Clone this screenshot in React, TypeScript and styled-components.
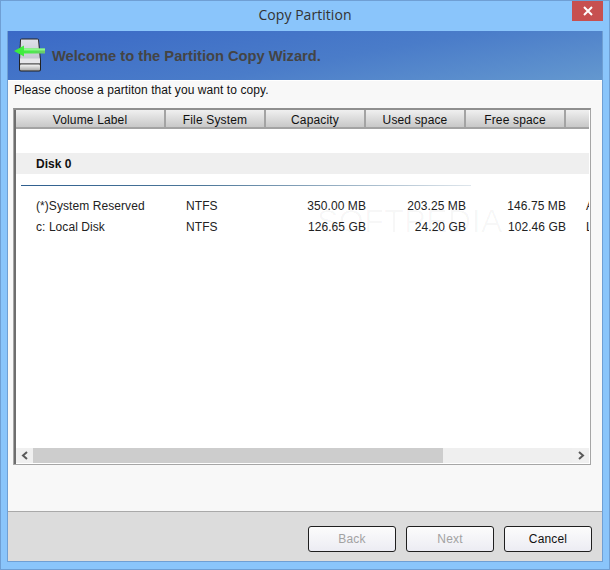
import React from 'react';
import styled, { createGlobalStyle } from 'styled-components';

const GlobalStyle = createGlobalStyle`
    html, body {
        margin: 0;
        padding: 0;
        overflow: hidden;
    }
    body {
        font-family: "Liberation Sans", Arial, sans-serif;
        font-size: 12px;
    }
`;

const Window = styled.div`
    display: flex;
    flex-direction: column;
    box-sizing: border-box;
    position: relative;
    width: 610px;
    height: 570px;
    border: 1px solid #6f9fd4;
    background-color: #8ac5fb;
    padding: 0 7px 7px;
`;

const TitleBar = styled.div`
    display: flex;
    align-items: center;
    justify-content: center;
    box-sizing: border-box;
    flex: none;
    height: 30px;
    padding-bottom: 3px;
    font-family: "Open Sans", sans-serif;
    font-size: 14px;
    letter-spacing: 0.05px;
    color: #333;
`;

const CloseButton = styled.div`
    position: absolute;
    top: 0;
    right: 6px;
    display: flex;
    align-items: center;
    justify-content: center;
    width: 31px;
    height: 20px;
    background-color: #c75050;
`;

const Panel = styled.div`
    display: flex;
    flex-direction: column;
    flex: 1;
    min-height: 0;
    border: 1px solid #6f9fd4;
    border-width: 0 1px 1px;
    margin: 0 -1px;
`;

const Banner = styled.div`
    display: flex;
    align-items: center;
    gap: 6px;
    flex: none;
    height: 49px;
    padding-left: 5px;
    border-bottom: 1px solid #fff;
    box-shadow: 0 1px 0 #a9a9a9;
    background: linear-gradient(170deg, #3a69c6 0%, #4a7cc9 55%, #6498cf 100%);
`;

const BannerTitle = styled.div`
    font-size: 14.7px;
    font-weight: bold;
    color: #444;
`;

const Content = styled.div`
    display: flex;
    flex-direction: column;
    flex: 1;
    min-height: 0;
    background-color: #f8f8f8;
    padding: 2px 11px 46px 5px;
`;

const Prompt = styled.div`
    flex: none;
    height: 25px;
    padding-left: 1px;
    line-height: 15px;
    letter-spacing: 0.07px;
    color: #111;
`;

const ListBox = styled.div`
    display: flex;
    flex-direction: column;
    flex: 1;
    min-height: 0;
    position: relative;
    border: 1px solid #a6a6a6;
    border-top-width: 2px;
    border-top-color: #8f8f8f;
    padding: 0 1px 1px 2px;
    background-color: #fff;
    box-shadow: inset 2px 0 0 #6e6e6e;
`;

const HeaderRow = styled.div`
    display: grid;
    grid-template-columns: 150px 100px 100px 100px 100px 1fr;
    flex: none;
    height: 17px;
    border-bottom: 2px solid #a3a3a3;
    background: linear-gradient(#f0f0f0, #c8c8c8);
`;

const HeaderCell = styled.div`
    display: flex;
    align-items: center;
    justify-content: center;
    box-sizing: border-box;
    padding-top: 3px;
    border-right: 2px solid #a3a3a3;
    letter-spacing: 0.15px;
    color: #111;
    &:last-child {
        border-right: 0;
    }
`;

const ListBody = styled.div`
    flex: 1;
    min-height: 0;
    overflow: hidden;
    padding-top: 24px;
`;

const DiskBand = styled.div`
    height: 21px;
    line-height: 23px;
    padding-left: 20px;
    background-color: #efefef;
    font-weight: bold;
    color: #111;
`;

const DiskRule = styled.div`
    width: 450px;
    height: 1px;
    margin: 11px 0 9px 5px;
    background: linear-gradient(90deg, #2f5f8f 0%, #4d7799 40%, #dfe6ec 100%);
`;

const PartitionRow = styled.div`
    display: grid;
    grid-template-columns: 150px 80px 100px 100px 100px minmax(0, 1fr);
    height: 21px;
    line-height: 23px;
    padding-left: 20px;
    letter-spacing: 0.07px;
    color: #222;
`;

const Cell = styled.div<{ $right?: boolean; $type?: boolean }>`
    white-space: nowrap;
    overflow: hidden;
    height: 21px;
    text-align: ${(p) => (p.$right ? 'right' : 'left')};
    padding-left: ${(p) => (p.$type ? '20px' : '0')};
`;

const ScrollBar = styled.div`
    display: flex;
    flex: none;
    height: 15px;
    background-color: #efefef;
`;

const ScrollArrow = styled.div`
    display: flex;
    align-items: center;
    justify-content: center;
    flex: none;
    width: 17px;
    background-color: #f0f0f0;
`;

const ScrollTrack = styled.div`
    flex: 1;
    background-color: #efefef;
`;

const ScrollThumb = styled.div`
    width: 410px;
    height: 100%;
    background-color: #cdcdcd;
`;

const Watermark = styled.div`
    position: absolute;
    left: 303px;
    top: 93px;
    font-size: 32px;
    letter-spacing: 0.5px;
    color: rgba(0, 0, 0, 0.03);
    pointer-events: none;
`;

const Footer = styled.div`
    display: flex;
    align-items: center;
    justify-content: flex-end;
    gap: 10px;
    box-sizing: border-box;
    flex: none;
    height: 50px;
    padding: 4px 10px 0 0;
    border-top: 1px solid #a9a9a9;
    background-color: #dcdcdc;
`;

const WizardButton = styled.div<{ $disabled?: boolean }>`
    display: flex;
    align-items: center;
    justify-content: center;
    box-sizing: border-box;
    width: 88px;
    height: 26px;
    padding-top: 1px;
    border: 1px solid #1f1f1f;
    border-radius: 3px;
    background: linear-gradient(#fcfcfc, #ececf3);
    letter-spacing: 0.15px;
    color: ${(p) => (p.$disabled ? '#a2a2a2' : '#111')};
`;

const DriveIcon = () => (
    <svg width="33" height="36" viewBox="0 1.5 33 36">
        <defs>
            <linearGradient id="driveTop" x1="0" y1="0" x2="0" y2="1">
                <stop offset="0" stopColor="#dfe1ea" />
                <stop offset="1" stopColor="#c3c6d0" />
            </linearGradient>
            <linearGradient id="driveBase" x1="0" y1="0" x2="0" y2="1">
                <stop offset="0" stopColor="#f7f7f7" />
                <stop offset="1" stopColor="#a9a9a9" />
            </linearGradient>
            <linearGradient id="arrowFill" x1="0" y1="0" x2="1" y2="0">
                <stop offset="0" stopColor="#35f035" />
                <stop offset="0.6" stopColor="#4fe84f" />
                <stop offset="1" stopColor="#6fc86f" />
            </linearGradient>
            <filter id="soft">
                <feGaussianBlur stdDeviation="0.35" />
            </filter>
        </defs>
        <g filter="url(#soft)">
            <path d="M7 4 Q7 2 9 2 H24 Q26 2 26 4 L28 24 V33 Q28 35 26 35 H8 Q6 35 6 33 V24 Z" fill="#222" />
            <path d="M8 3 H25 L27 24 H7 Z" fill="url(#driveTop)" />
            <rect x="7" y="22" width="20" height="5" fill="#e6e6ea" />
            <rect x="7" y="27" width="20" height="1" fill="#666" />
            <rect x="7" y="28" width="20" height="6" rx="1" fill="url(#driveBase)" />
            <path d="M1 14.5 L11 9 V12 H32 V17 H11 V20 Z" fill="url(#arrowFill)" />
            <path d="M11 12 H32 V14 H11 Z" fill="#8dfa8d" />
        </g>
    </svg>
);

const Chevron = ({ dir }: { dir: 'left' | 'right' }) => (
    <svg width="8" height="9" viewBox="0 0 8 9">
        <path
            d={dir === 'left' ? 'M6 1 L2 4.5 L6 8' : 'M2 1 L6 4.5 L2 8'}
            fill="none"
            stroke="#5a5a5a"
            strokeWidth="2"
        />
    </svg>
);

const columns = ['Volume Label', 'File System', 'Capacity', 'Used space', 'Free space', ''];

const partitions = [
    { label: '(*)System Reserved', fs: 'NTFS', capacity: '350.00 MB', used: '203.25 MB', free: '146.75 MB', type: 'Active' },
    { label: 'c: Local Disk', fs: 'NTFS', capacity: '126.65 GB', used: '24.20 GB', free: '102.46 GB', type: 'Logical' },
];

const App: React.FunctionComponent = () => {
    return (
        <Window>
            <GlobalStyle />
            <TitleBar>Copy Partition</TitleBar>
            <CloseButton>
                <svg width="10" height="10" viewBox="0 0 10 10">
                    <path d="M1 1 L9 9 M9 1 L1 9" stroke="#fff" strokeWidth="2" />
                </svg>
            </CloseButton>
            <Panel>
                <Banner>
                    <DriveIcon />
                    <BannerTitle>Welcome to the Partition Copy Wizard.</BannerTitle>
                </Banner>
                <Content>
                    <Prompt>Please choose a partiton that you want to copy.</Prompt>
                    <ListBox>
                        <HeaderRow>
                            {columns.map((c, i) => (
                                <HeaderCell key={i}>{c}</HeaderCell>
                            ))}
                        </HeaderRow>
                        <ListBody>
                            <DiskBand>Disk 0</DiskBand>
                            <DiskRule />
                            {partitions.map((p) => (
                                <PartitionRow key={p.label}>
                                    <Cell>{p.label}</Cell>
                                    <Cell>{p.fs}</Cell>
                                    <Cell $right>{p.capacity}</Cell>
                                    <Cell $right>{p.used}</Cell>
                                    <Cell $right>{p.free}</Cell>
                                    <Cell $type>{p.type}</Cell>
                                </PartitionRow>
                            ))}
                        </ListBody>
                        <ScrollBar>
                            <ScrollArrow>
                                <Chevron dir="left" />
                            </ScrollArrow>
                            <ScrollTrack>
                                <ScrollThumb />
                            </ScrollTrack>
                            <ScrollArrow>
                                <Chevron dir="right" />
                            </ScrollArrow>
                        </ScrollBar>
                        <Watermark>SOFTPEDIA</Watermark>
                    </ListBox>
                </Content>
                <Footer>
                    <WizardButton $disabled>Back</WizardButton>
                    <WizardButton $disabled>Next</WizardButton>
                    <WizardButton>Cancel</WizardButton>
                </Footer>
            </Panel>
        </Window>
    );
};

export default App;
